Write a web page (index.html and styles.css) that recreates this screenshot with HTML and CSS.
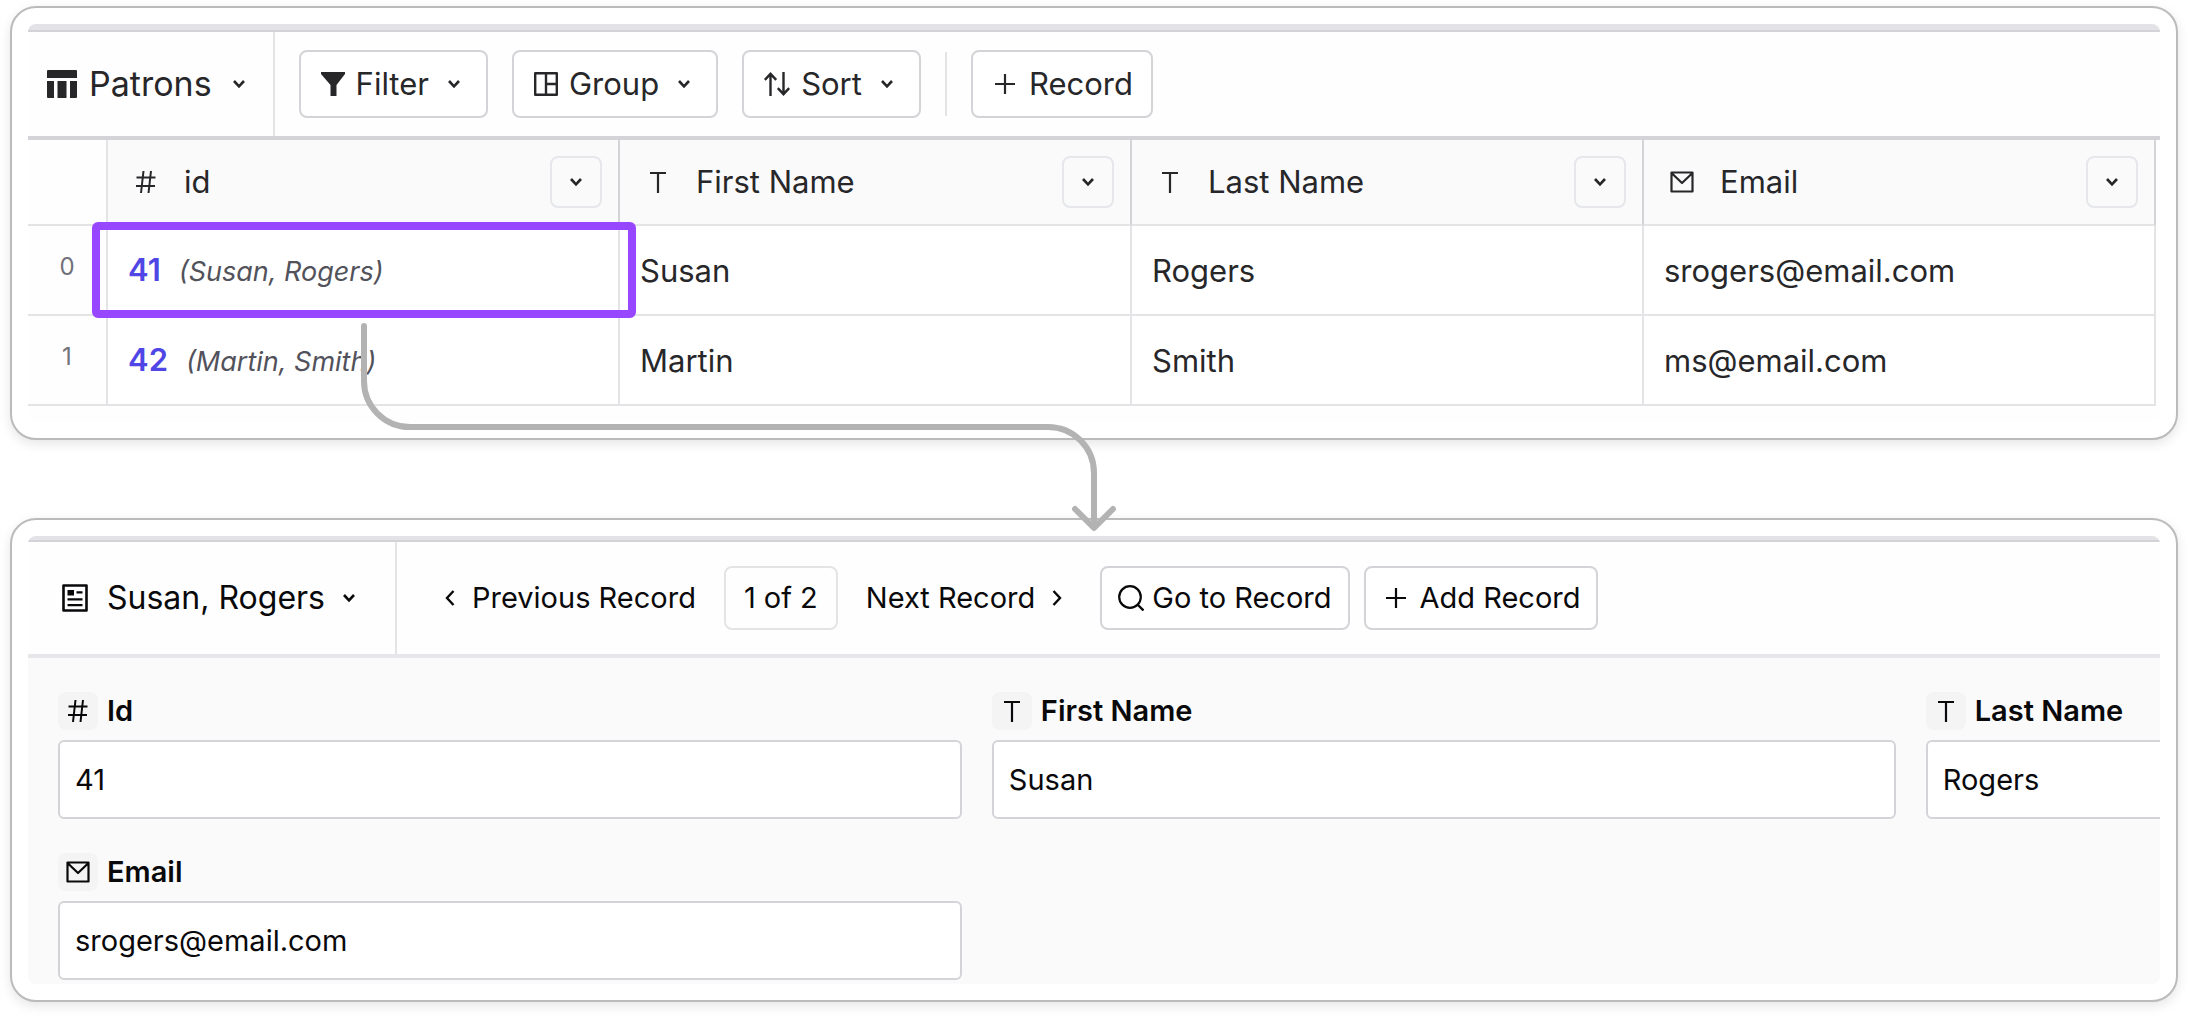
FILE: index.html
```
<!DOCTYPE html>
<html lang="en">
<head>
  <meta charset="UTF-8" />
  <meta name="viewport" content="width=device-width, initial-scale=1" />
  <title>Patrons</title>
  <link rel="stylesheet" href="styles.css">
</head>
<body>
  <!-- Icons -->
  <svg class="sprite" aria-hidden="true">
    <symbol id="caret" viewBox="0 0 12 10"><path d="M1 2 6 7.300 11 2" fill="none" stroke="currentColor" stroke-width="2.600"/></symbol>
    <symbol id="plus" viewBox="0 0 20 20"><path d="M10 0v20M0 10h20" fill="none" stroke="currentColor" stroke-width="2.200"/></symbol>
    <symbol id="hash" viewBox="0 0 24 24"><path d="M9.500 1 7 23M17 1l-2.500 22M2.500 7.500h19M2 16h19" fill="none" stroke="currentColor" stroke-width="2"/></symbol>
    <symbol id="type" viewBox="0 0 24 24"><path d="M4 3h16M12 3v20" fill="none" stroke="currentColor" stroke-width="2.200"/></symbol>
    <symbol id="mail" viewBox="0 0 24 24"><path d="M1.500 2.500h21v19h-21zM1.500 3 12 13 22.500 3" fill="none" stroke="currentColor" stroke-width="2.200" stroke-linejoin="round"/></symbol>
  </svg>

  <!-- Grid view -->
  <section class="card">
    <div class="window">
      <div class="window-top"></div>
      <div class="toolbar">
        <button class="title">
          <svg class="icon-table" viewBox="0 0 30 28"><path fill="currentColor" d="M1 0h28a1 1 0 0 1 1 1v7H0V1a1 1 0 0 1 1-1zM0 11h7v17H1a1 1 0 0 1-1-1zM10.500 11h9v17h-9zM23 11h7v16a1 1 0 0 1-1 1h-6z"/></svg>
          <span>Patrons</span>
          <svg class="caret"><use href="#caret"/></svg>
        </button>
        <div class="actions">
          <button class="btn">
            <svg class="icon" viewBox="0 0 24 24"><path fill="currentColor" d="M0 0h24v2l-8.500 11v11h-6V13L0 2z"/></svg>
            <span>Filter</span>
            <svg class="caret"><use href="#caret"/></svg>
          </button>
          <button class="btn">
            <svg class="icon" viewBox="0 0 24 24"><path d="M1.200 1.200h21.600v21.600H1.200zM12 1v22M12 12h11" fill="none" stroke="currentColor" stroke-width="2.400" stroke-linejoin="round"/></svg>
            <span>Group</span>
            <svg class="caret"><use href="#caret"/></svg>
          </button>
          <button class="btn">
            <svg class="icon-sort" viewBox="0 0 26 24"><path d="M6.500 24V2M.8 7.800 6.500 1.800l5.700 6M19.500 0v22M13.800 16.200l5.700 6 5.700-6" fill="none" stroke="currentColor" stroke-width="2.400"/></svg>
            <span>Sort</span>
            <svg class="caret"><use href="#caret"/></svg>
          </button>
          <div class="divider"></div>
          <button class="btn btn-add">
            <svg class="plus"><use href="#plus"/></svg>
            <span>Record</span>
          </button>
        </div>
      </div>

      <table class="records">
        <thead>
          <tr>
            <th class="num"></th>
            <th><div class="col"><svg class="icon"><use href="#hash"/></svg><span>id</span><button aria-label="id options"><svg class="caret"><use href="#caret"/></svg></button></div></th>
            <th><div class="col"><svg class="icon"><use href="#type"/></svg><span>First Name</span><button aria-label="First Name options"><svg class="caret"><use href="#caret"/></svg></button></div></th>
            <th><div class="col"><svg class="icon"><use href="#type"/></svg><span>Last Name</span><button aria-label="Last Name options"><svg class="caret"><use href="#caret"/></svg></button></div></th>
            <th><div class="col"><svg class="icon"><use href="#mail"/></svg><span>Email</span><button aria-label="Email options"><svg class="caret"><use href="#caret"/></svg></button></div></th>
          </tr>
        </thead>
        <tbody>
          <tr>
            <td class="num">0</td>
            <td class="selected"><a href="#record">41</a><em>(Susan, Rogers)</em></td>
            <td>Susan</td>
            <td>Rogers</td>
            <td>srogers@email.com</td>
          </tr>
          <tr>
            <td class="num">1</td>
            <td><a href="#record">42</a><em>(Martin, Smith)</em></td>
            <td>Martin</td>
            <td>Smith</td>
            <td>ms@email.com</td>
          </tr>
        </tbody>
      </table>
    </div>
  </section>

  <!-- Arrow from the selected cell down to its record -->
  <svg class="arrow" viewBox="0 0 760 214" aria-hidden="true">
    <path d="M7 6v55a46 46 0 0 0 46 46h638a46 46 0 0 1 46 46v52M718 189l19 19 19-19" fill="none" stroke="#b3b3b3" stroke-width="6" stroke-linecap="round" stroke-linejoin="round"/>
  </svg>

  <!-- Record view -->
  <section class="card" id="record">
    <div class="window">
      <div class="window-top slim"></div>
      <div class="toolbar record-bar">
        <button class="title">
          <svg class="icon-doc" viewBox="0 0 26 28"><path d="M1.500 1.500h23v25h-23z" fill="none" stroke="currentColor" stroke-width="2.600" stroke-linejoin="round"/><path fill="currentColor" d="M5.500 6h6.500v5.500H5.500zM14.500 7.300h6v2.200h-6zM5.500 14.200h15v2.200h-15zM5.500 20h15v2.200h-15z"/></svg>
          <span>Susan, Rogers</span>
          <svg class="caret"><use href="#caret"/></svg>
        </button>
        <div class="pager">
          <button class="link">
            <svg class="chevron" viewBox="0 0 10 16"><path d="M8.500 1 2 8l6.500 7" fill="none" stroke="currentColor" stroke-width="2.400"/></svg>
            <span>Previous Record</span>
          </button>
          <span class="count">1 of 2</span>
          <button class="link">
            <span>Next Record</span>
            <svg class="chevron" viewBox="0 0 10 16"><path d="M1.500 1 8 8l-6.500 7" fill="none" stroke="currentColor" stroke-width="2.400"/></svg>
          </button>
        </div>
        <div class="record-actions">
          <button class="btn btn-go">
            <svg class="icon-search" viewBox="0 0 26 26"><circle cx="12" cy="12" r="10.800" fill="none" stroke="currentColor" stroke-width="2.200"/><path d="m19.500 19.500 6 6" stroke="currentColor" stroke-width="2.400"/></svg>
            <span>Go to Record</span>
          </button>
          <button class="btn btn-add">
            <svg class="plus"><use href="#plus"/></svg>
            <span>Add Record</span>
          </button>
        </div>
      </div>

      <form class="fields">
        <div class="field">
          <label for="id"><span class="chip"><svg class="icon"><use href="#hash"/></svg></span>Id</label>
          <input type="text" id="id" value="41">
        </div>
        <div class="field">
          <label for="first"><span class="chip"><svg class="icon"><use href="#type"/></svg></span>First Name</label>
          <input type="text" id="first" value="Susan">
        </div>
        <div class="field">
          <label for="last"><span class="chip"><svg class="icon"><use href="#type"/></svg></span>Last Name</label>
          <input type="text" id="last" value="Rogers">
        </div>
        <div class="field">
          <label for="email"><span class="chip"><svg class="icon"><use href="#mail"/></svg></span>Email</label>
          <input type="text" id="email" value="srogers@email.com">
        </div>
      </form>
    </div>
  </section>
</body>
</html>
```

FILE: styles.css
```
* {
    box-sizing: border-box;
}

body {
    position: relative;
    margin: 0;
    padding: 6px 10px 14px;
    display: flex;
    flex-direction: column;
    gap: 78px;
    background: #fff;
    color: #27272a;
    font-family: Inter, "Liberation Sans", sans-serif;
    font-size: 31px;
    line-height: 36px;
}

button,
input {
    font: inherit;
    color: inherit;
}

button {
    display: flex;
    align-items: center;
    padding: 0;
    border: 0;
    background: none;
    white-space: nowrap;
    cursor: pointer;
}

svg {
    flex: none;
}

.sprite {
    position: absolute;
    width: 0;
    height: 0;
}

/* Cards */
.card {
    padding: 16px;
    border: 2px solid #bbb;
    border-radius: 26px;
    background: #fff;
    box-shadow: 0 4px 12px rgba(0, 0, 0, 0.1);
}

.window {
    overflow: hidden;
    border-radius: 8px;
    background: #fefefe;
}

.window-top {
    height: 8px;
    background: #e3e3e7;
    border-bottom: 2px solid #d2d2d7;
}

.window-top.slim {
    height: 6px;
}

/* Icons */
.icon {
    width: 24px;
    height: 24px;
}

.icon-table {
    width: 30px;
    height: 28px;
}

.icon-sort {
    width: 26px;
    height: 24px;
}

.icon-doc {
    width: 26px;
    height: 28px;
}

.icon-search {
    width: 26px;
    height: 26px;
}

.caret {
    width: 12px;
    height: 10px;
}

.plus {
    width: 20px;
    height: 20px;
}

.chevron {
    width: 10px;
    height: 16px;
}

/* Toolbars */
.toolbar {
    display: flex;
    height: 108px;
    border-bottom: 4px solid #d4d4d8;
}

.title {
    padding: 0 28px 0 19px;
    border-right: 2px solid #e4e4e7;
    font-size: 34px;
}

.title .caret {
    margin-left: 21px;
}

.icon-table {
    margin-right: 12px;
}

.actions {
    display: flex;
    align-items: center;
    gap: 24px;
    padding-left: 24px;
}

.btn {
    height: 68px;
    padding: 0 26px 0 20px;
    border: 2px solid #d4d4d8;
    border-radius: 8px;
    background: #fff;
}

.btn span {
    margin-left: 11px;
}

.btn .caret {
    margin-left: 19px;
}

.btn-add {
    padding: 0 18px 0 22px;
}

.btn-add span {
    margin-left: 14px;
}

.divider {
    width: 2px;
    height: 64px;
    background: #e4e4e7;
}

/* Records table */
.records {
    width: calc(100% - 4px);
    table-layout: fixed;
    border-collapse: separate;
    border-spacing: 0;
}

.records th,
.records td {
    padding: 2px 20px 0;
    border-right: 2px solid #e4e4e7;
    border-bottom: 2px solid #e4e4e7;
    text-align: left;
    font-weight: 400;
}

.records th {
    height: 86px;
    padding: 0 16px 0 26px;
    border-right-color: #d4d4d8;
    background: #fafafa;
}

.records td {
    height: 90px;
    background: #fff;
}

.records .num {
    width: 80px;
    padding: 0 0 6px;
    background: #fefefe;
    border-right-color: #e4e4e7;
    color: #71717a;
    font-size: 24px;
    text-align: center;
}

.col {
    display: flex;
    align-items: center;
}

.col span {
    margin-left: 26px;
}

.col button {
    width: 52px;
    height: 52px;
    margin-left: auto;
    justify-content: center;
    border: 2px solid #e5e7eb;
    border-radius: 8px;
}

.records a {
    color: #4f46e5;
    font-weight: 600;
    text-decoration: none;
}

.records em {
    margin-left: 18px;
    color: #52525b;
    font-size: 27px;
}

.selected {
    position: relative;
}

.selected::after {
    content: '';
    position: absolute;
    inset: -4px -18px -4px -16px;
    border: 8px solid #9747ff;
    border-radius: 6px;
}

.card:first-of-type .window {
    padding-bottom: 16px;
}

.arrow {
    position: absolute;
    top: 320px;
    left: 357px;
    width: 760px;
    height: 214px;
    pointer-events: none;
}

/* Record view */
#record {
    color: #09090b;
    font-size: 29px;
}

.record-bar {
    height: 116px;
    border-bottom-color: #e5e7eb;
}

.record-bar .title {
    padding: 0 40px 0 34px;
    font-size: 32px;
}

.record-bar .title .caret {
    margin-left: 18px;
}

.icon-doc {
    margin-right: 19px;
}

.pager,
.record-actions {
    display: flex;
    align-items: center;
}

.pager {
    gap: 28px;
    padding-left: 48px;
}

.link {
    gap: 17px;
}

.count {
    padding: 12px 18px;
    border: 2px solid #e4e4e7;
    border-radius: 8px;
    white-space: nowrap;
}

.record-actions {
    gap: 14px;
    padding-left: 38px;
}

.record-bar .btn {
    height: 64px;
}

.record-bar .btn-go {
    padding: 0 16px;
}

.record-bar .btn-add {
    padding: 0 16px 0 20px;
}

.btn-go span {
    margin-left: 8px;
}

.fields {
    display: grid;
    grid-template-columns: repeat(3, 43%);
    gap: 34px 30px;
    padding: 34px 0 4px 30px;
    background: #fafafa;
}

.field {
    display: flex;
    flex-direction: column;
    gap: 10px;
}

.field label {
    display: flex;
    align-items: center;
    gap: 9px;
    font-weight: 600;
}

.chip {
    display: flex;
    align-items: center;
    justify-content: center;
    width: 40px;
    height: 38px;
    border-radius: 8px;
    background: #f4f4f5;
}

.field input {
    width: 100%;
    height: 79px;
    padding: 0 15px;
    border: 2px solid #d4d4d8;
    border-radius: 6px;
    background: #fff;
}
```
